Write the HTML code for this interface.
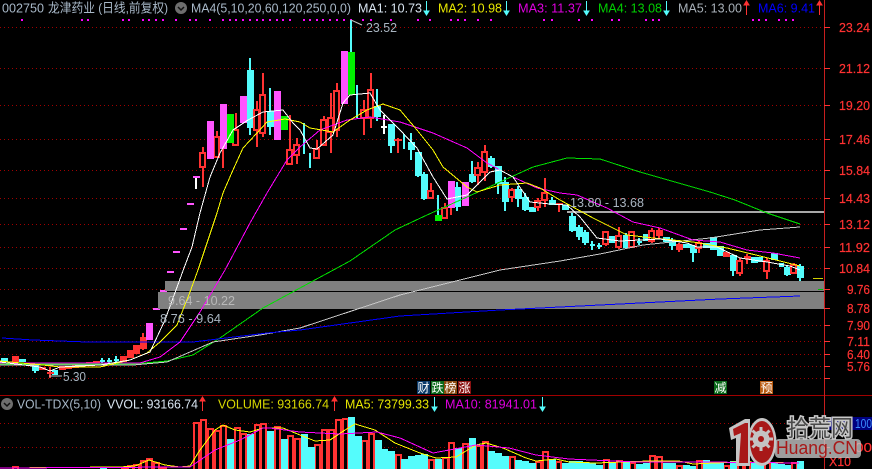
<!DOCTYPE html>
<html><head><meta charset="utf-8"><style>
html,body{margin:0;padding:0;background:#000;width:872px;height:469px;overflow:hidden}
svg{display:block;font-family:"Liberation Sans","Noto Sans CJK SC",sans-serif}
.g{stroke:#a00000;stroke-width:1;stroke-dasharray:1 3;fill:none}
.a{fill:#ff3232;font-size:13px;stroke:#ff3232;stroke-width:.2}
.h{font-size:13px}
.m{fill:none;stroke-width:1}
.lb{fill:#fff;font-size:12px}
</style></head><body>
<svg width="872" height="469" viewBox="0 0 872 469" xmlns="http://www.w3.org/2000/svg">
<rect width="872" height="469" fill="#000"/>
<path class="g" d="M0 27.5H824M0 68.5H824M0 105.5H824M0 139.5H824M0 170.5H824M0 198.5H824M0 224.5H824M0 247.5H824M0 268.5H824M0 289.5H824M0 308.5H824M0 325.5H824M0 341.5H824M0 354.5H824M0 366.5H824M0 378.5H824M0 423.5H824M0 447.5H824"/>
<path fill="#f0f" d="M21 19h2v2h-2zM81 19h2v2h-2zM87 19h2v2h-2zM122 19h2v2h-2zM128 19h2v2h-2zM142 19h2v2h-2zM148 19h2v2h-2zM155 19h2v2h-2zM162 19h2v2h-2zM175 19h2v2h-2zM189 19h2v2h-2zM195 19h2v2h-2zM209 19h2v2h-2zM222 19h2v2h-2zM229 19h2v2h-2zM235 19h2v2h-2zM242 19h2v2h-2zM249 19h2v2h-2zM256 19h2v2h-2zM262 19h2v2h-2zM269 19h2v2h-2zM276 19h2v2h-2zM282 19h2v2h-2zM289 19h2v2h-2zM303 19h2v2h-2zM309 19h2v2h-2zM316 19h2v2h-2zM322 19h2v2h-2zM329 19h2v2h-2zM336 19h2v2h-2zM343 19h2v2h-2zM350 19h2v2h-2zM362 19h2v2h-2zM370 19h2v2h-2zM390 19h2v2h-2zM417 19h2v2h-2zM429 19h2v2h-2zM450 19h2v2h-2zM457 19h2v2h-2zM464 19h2v2h-2zM477 19h2v2h-2zM490 19h2v2h-2zM543 19h2v2h-2zM551 19h2v2h-2zM578 19h2v2h-2zM591 19h2v2h-2zM611 19h2v2h-2zM618 19h2v2h-2zM645 19h2v2h-2zM652 19h2v2h-2zM658 19h2v2h-2zM752 19h2v2h-2zM758 19h2v2h-2zM765 19h2v2h-2zM778 19h2v2h-2zM785 19h2v2h-2zM792 19h2v2h-2z"/>

<!-- cyan wicks -->
<path stroke="#54fcfc" stroke-width="2" fill="none" shape-rendering="crispEdges" d="M351 20V52M250 58V135M270 88V135M304 123V154M310 153V168M357 85V118M377 89V121M391 124V153M404 134V149M411 133V160M418 152V177M424 172V200M438 195V216M457 182V211M472 161V183M491 156V168M498 166V194M505 177V211M518 186V207M525 193V211M552 197V205M572 213V232M579 225V240M585 230V245M592 241V250M599 243V249M626 233V248M639 238V245M672 238V250M693 245V262M733 255V276M787 265V276M800 264V281M102 358V364M109 358V364M116 356V364M35 365V373"/>
<!-- cyan bodies -->
<path fill="#54fcfc" shape-rendering="crispEdges" d="M247 70h7v58h-7zM267 111h7v16h-7zM374 106h7v11h-7zM388 124h7v22h-7zM408 142h7v8h-7zM415 152h7v24h-7zM421 174h7v25h-7zM454 187h7v20h-7zM469 174h7v8h-7zM488 158h7v9h-7zM495 166h7v18h-7zM502 182h7v20h-7zM515 189h7v10h-7zM522 197h7v13h-7zM529 207h7v5h-7zM549 200h7v5h-7zM562 205h7v5h-7zM569 216h7v15h-7zM576 227h7v10h-7zM582 232h7v11h-7zM590 244h5v2h-5zM597 245h5v2h-5zM609 236h7v7h-7zM623 235h7v13h-7zM637 241h5v2h-5zM643 234h7v7h-7zM663 237h7v5h-7zM669 240h7v6h-7zM683 244h7v4h-7zM690 245h7v8h-7zM703 243h7v5h-7zM710 237h7v13h-7zM717 246h7v10h-7zM730 255h7v16h-7zM751 257h7v6h-7zM758 257h5v5h-5zM771 253h7v7h-7zM779 263h5v4h-5zM784 267h7v8h-7zM797 266h7v12h-7zM1 358h7v4h-7zM19 359h7v3h-7zM32 365h7v6h-7zM52 370h6v5h-6zM100 360h5v2h-5zM107 360h5v2h-5zM114 359h5v2h-5z"/>
<!-- red wicks -->
<path stroke="#ff3232" stroke-width="2" fill="none" shape-rendering="crispEdges" d="M203 147V187M217 131V157M223 149V168M236 113V145M257 101V147M263 73V137M290 115V164M297 138V164M317 140V159M324 116V145M331 93V153M337 83V137M364 100V135M371 73V128M398 138V153M431 183V198M445 203V218M451 205V215M478 162V185M485 145V181M512 188V202M538 198V211M545 178V207M559 203V212M606 231V246M619 227V249M632 232V248M652 228V243M659 228V238M679 243V252M699 241V253M740 258V276M747 254V264M767 258V279M794 263V274M50 367V378M143 333V350"/>
<!-- red hollow bodies -->
<path stroke="#ff3232" stroke-width="2" fill="#000" shape-rendering="crispEdges" d="M200 153h5v14h-5zM214 137h5v20h-5zM233 130h5v15h-5zM254 110h5v20h-5zM260 95h5v38h-5zM287 150h5v14h-5zM294 145h5v10h-5zM314 149h5v9h-5zM321 120h5v25h-5zM328 118h5v14h-5zM334 91h5v39h-5zM361 110h5v8h-5zM368 90h5v28h-5zM428 191h5v7h-5zM442 208h5v10h-5zM475 168h5v7h-5zM482 152h5v20h-5zM509 190h5v7h-5zM535 201h5v6h-5zM542 193h5v7h-5zM603 232h5v12h-5zM616 236h5v11h-5zM629 232h5v15h-5zM649 231h5v10h-5zM696 243h5v5h-5zM737 261h5v12h-5zM764 261h5v10h-5zM791 265h5v8h-5z"/>
<path fill="#ff3232" shape-rendering="crispEdges" d="M394 139h8v2h-8zM556 203h7v2h-7zM656 230h7v6h-7zM676 244h7v6h-7zM723 252h7v5h-7zM744 256h7v3h-7zM12 356h7v6h-7zM39 367h7v3h-7zM47 372h7v2h-7zM59 366h7v4h-7zM65 367h7v2h-7zM72 365h7v3h-7zM79 365h7v2h-7zM86 362h7v3h-7zM93 361h7v3h-7zM120 356h7v6h-7zM127 350h7v8h-7zM133 345h7v9h-7zM140 337h7v12h-7z"/>
<!-- magenta & green bodies -->
<path fill="#ff54ff" shape-rendering="crispEdges" d="M207 121h7v38h-7zM220 104h7v45h-7zM240 96h7v27h-7zM274 91h7v49h-7zM341 51h7v53h-7zM448 181h7v27h-7zM462 182h7v24h-7zM146 323h7v17h-7z"/>
<path fill="#00f000" shape-rendering="crispEdges" d="M227 114h7v29h-7zM281 116h7v14h-7zM348 52h7v43h-7zM435 215h7v6h-7z"/>
<path fill="#ff54ff" shape-rendering="crispEdges" d="M193 176h7v2h-7zM187 203h7v2h-7zM180 228h7v2h-7zM173 251h7v2h-7zM167 271h7v2h-7zM160 290h7v2h-7zM153 308h7v2h-7z"/>
<rect x="195" y="178" width="2" height="11" fill="#fff"/>
<rect x="383" y="115" width="2" height="19" fill="#fff"/><rect x="381" y="126" width="6" height="2" fill="#fff"/>

<!-- zones -->
<rect x="165" y="281" width="659" height="10" fill="#808080"/>
<rect x="158" y="292" width="666" height="17" fill="#808080"/>
<rect x="567" y="211" width="257" height="2" fill="#a8a8a8"/>

<!-- MA lines -->
<g shape-rendering="crispEdges">
<polyline class="m" stroke="#00e000" points="0,364 133,364 167,361 193,355 220,338 263,308 300,288 350,261 395,230 427,215 467,197 500,182 533,167 567,158 600,159 640,172 668,180 710,192 735,200 767,213 800,224"/>
<polyline class="m" stroke="#c8c8c8" points="0,365 133,365 167,362 213,342 260,335 300,328 400,295 500,270 560,261 600,254 643,245 710,238 760,230 800,227"/>
<polyline class="m" stroke="#0000ff" points="2,338 33,340 60,341 87,342 193,342 267,333 300,330 400,316 500,310 560,307 640,303 720,299 800,296"/>
<polyline class="m" stroke="#ff00ff" points="0,363 140,363 160,357 180,342 200,312 225,270 250,223 267,193 287,160 300,147 320,130 347,120 370,117 400,122 433,133 467,148 487,163 513,177 537,188 560,193 577,195 607,208 633,222 660,228 693,240 720,242 747,250 773,253 800,258"/>
<polyline class="m" stroke="#ffff00" points="0,361 10,362 43,365 60,367 100,367 130,360 147,353 160,342 177,325 190,292 198,270 207,243 217,213 223,193 233,170 243,148 257,133 267,122 285,119 300,122 310,128 333,132 350,120 367,110 383,104 400,110 417,130 433,150 443,167 467,187 477,192 500,185 527,183 540,188 560,200 593,218 627,235 653,238 693,242 727,248 760,256 800,266"/>
<polyline class="m" stroke="#ffffff" points="0,362 40,367 50,371 60,367 100,365 130,360 150,352 165,320 184,268 192,247 200,213 210,177 220,153 233,130 248,120 263,112 283,110 293,123 300,130 310,148 317,149 333,135 343,103 350,95 370,93 380,110 400,130 417,148 433,177 447,199 467,195 490,172 500,170 513,177 530,202 550,204 567,205 580,217 597,238 620,241 660,239 687,243 697,247 717,247 740,258 767,262 790,266 800,270"/>
</g>
<rect x="813" y="278" width="10" height="1" fill="#d0d000"/>
<rect x="818" y="289" width="5" height="1" fill="#00c000"/>

<!-- annotations -->
<g class="h" fill="#a8b4c0">
<path d="M351 20l11 5" stroke="#c0c0c0" fill="none"/>
<text x="366" y="32" textLength="31" lengthAdjust="spacingAndGlyphs">23.52</text>
<path d="M49 376H62" stroke="#c0c0c0" fill="none"/>
<text x="63" y="381" textLength="23" lengthAdjust="spacingAndGlyphs">5.30</text>
<text x="570" y="207" textLength="74" lengthAdjust="spacingAndGlyphs">13.80 - 13.68</text>
<text x="168" y="305" textLength="67" lengthAdjust="spacingAndGlyphs" fill="#b8b8b8">9.64 - 10.22</text>
<text x="160" y="323" textLength="61" lengthAdjust="spacingAndGlyphs">8.76 - 9.64</text>
</g>

<!-- labels -->
<g shape-rendering="crispEdges">
<rect x="417" y="381" width="13" height="13" fill="#0a3a6a"/><rect x="431" y="381" width="13" height="13" fill="#0a6a1a"/><rect x="444" y="381" width="13" height="13" fill="#8a4a10"/><rect x="458" y="381" width="13" height="13" fill="#8a1010"/><rect x="714" y="381" width="13" height="13" fill="#0a6a1a"/><rect x="760" y="381" width="13" height="13" fill="#b85a10"/>
</g>
<g class="lb"><text x="417.500" y="392">财</text><text x="431.500" y="392">跌</text><text x="444.500" y="392">榜</text><text x="458.500" y="392">涨</text><text x="714.500" y="392">减</text><text x="760.500" y="392">预</text></g>

<!-- volume bars -->
<path stroke="#ff3232" stroke-width="2" fill="#000" shape-rendering="crispEdges" d="M194 423h5v47h-5zM201 420h5v50h-5zM208 429h5v41h-5zM215 431h5v39h-5zM221 426h5v44h-5zM235 428h5v42h-5zM241 434h5v36h-5zM255 425h5v45h-5zM261 424h5v46h-5zM275 427h5v43h-5zM288 436h5v34h-5zM295 439h5v31h-5zM315 445h5v25h-5zM322 430h5v40h-5zM329 430h5v40h-5zM336 420h5v50h-5zM343 419h5v51h-5zM362 441h5v29h-5zM369 434h5v36h-5zM396 455h5v15h-5zM429 460h5v10h-5zM443 458h5v12h-5zM449 443h5v27h-5zM463 444h5v26h-5zM476 446h5v24h-5zM483 442h5v28h-5zM510 457h5v13h-5zM536 462h5v8h-5zM543 452h5v18h-5zM556 462h5v8h-5zM604 460h5v10h-5zM617 461h5v9h-5zM630 463h5v7h-5zM650 456h5v14h-5zM657 457h5v13h-5zM677 466h5v4h-5zM697 461h5v9h-5zM724 466h5v4h-5zM738 463h5v7h-5zM745 462h5v8h-5zM765 463h5v7h-5zM792 463h5v7h-5zM13 467h5v3h-5zM122 468h5v2h-5zM128 466h5v4h-5zM134 465h5v5h-5zM141 461h5v9h-5zM147 459h5v11h-5zM154 463h5v7h-5zM161 468h5v2h-5z"/>
<path fill="#54fcfc" shape-rendering="crispEdges" d="M227 439h7v30h-7zM247 434h7v35h-7zM267 431h7v38h-7zM281 439h7v30h-7zM301 434h7v35h-7zM308 447h7v22h-7zM348 417h7v52h-7zM355 436h7v33h-7zM375 440h7v29h-7zM381 449h7v20h-7zM388 451h7v18h-7zM401 459h7v10h-7zM408 456h7v13h-7zM415 455h7v14h-7zM421 454h7v15h-7zM435 459h7v10h-7zM455 448h7v21h-7zM469 438h7v31h-7zM488 451h7v18h-7zM495 453h7v16h-7zM502 456h7v13h-7zM515 460h7v9h-7zM522 461h7v8h-7zM529 463h7v6h-7zM549 459h7v10h-7zM562 463h7v6h-7zM569 461h7v8h-7zM576 461h7v8h-7zM582 463h7v6h-7zM589 463h7v6h-7zM596 465h7v4h-7zM609 463h7v6h-7zM623 462h7v7h-7zM636 464h7v5h-7zM643 463h7v6h-7zM663 463h7v6h-7zM669 463h7v6h-7zM683 465h7v4h-7zM689 466h7v3h-7zM703 460h7v9h-7zM710 462h7v7h-7zM717 463h7v6h-7zM730 461h7v8h-7zM751 463h7v6h-7zM757 463h7v6h-7zM771 463h7v6h-7zM778 464h7v5h-7zM784 465h7v4h-7zM797 461h7v8h-7zM100 468h7v1h-7z"/>
<g shape-rendering="crispEdges">
<polyline class="m" stroke="#ffff00" points="0,468 120,467 135,466 149,460 165,465 180,467 190,466 200,450 215,430 223,425 235,430 250,432 263,428 283,428 300,435 315,441 330,440 345,430 355,424 375,430 395,443 420,453 436,458 456,457 476,445 486,443 503,448 526,458 536,461 556,459 569,462 596,463 649,461 679,461 693,464 736,462 799,463"/>
<polyline class="m" stroke="#ff00ff" points="0,468 190,467 215,450 240,440 263,428 270,428 300,432 340,434 377,432 400,438 433,453 476,445 509,448 536,455 569,459 636,462 703,462 799,463"/>
</g>

<!-- frames -->
<rect x="0" y="395" width="872" height="1" fill="#a00000"/>
<rect x="824" y="0" width="1" height="469" fill="#c81e1e"/>
<path stroke="#ff3232" fill="none" d="M824 27.500h6M824 68.500h6M824 105.500h6M824 139.500h6M824 170.500h6M824 198.500h6M824 224.500h6M824 247.500h6M824 268.500h6M824 289.500h6M824 308.500h6M824 325.500h6M824 341.500h6M824 354.500h6M824 366.500h6M824 378.500h6M824 447.500h6"/>
<g class="a">
<text x="839" y="32" textLength="31" lengthAdjust="spacingAndGlyphs">23.24</text>
<text x="839" y="73" textLength="31" lengthAdjust="spacingAndGlyphs">21.12</text>
<text x="839" y="110" textLength="31" lengthAdjust="spacingAndGlyphs">19.20</text>
<text x="839" y="144" textLength="31" lengthAdjust="spacingAndGlyphs">17.46</text>
<text x="839" y="175" textLength="31" lengthAdjust="spacingAndGlyphs">15.84</text>
<text x="839" y="203" textLength="31" lengthAdjust="spacingAndGlyphs">14.43</text>
<text x="839" y="229" textLength="31" lengthAdjust="spacingAndGlyphs">13.12</text>
<text x="839" y="252" textLength="31" lengthAdjust="spacingAndGlyphs">11.92</text>
<text x="839" y="273" textLength="31" lengthAdjust="spacingAndGlyphs">10.84</text>
<text x="847" y="294" textLength="23" lengthAdjust="spacingAndGlyphs">9.76</text>
<text x="847" y="313" textLength="23" lengthAdjust="spacingAndGlyphs">8.78</text>
<text x="847" y="330" textLength="23" lengthAdjust="spacingAndGlyphs">7.90</text>
<text x="847" y="346" textLength="23" lengthAdjust="spacingAndGlyphs">7.11</text>
<text x="847" y="359" textLength="23" lengthAdjust="spacingAndGlyphs">6.40</text>
<text x="847" y="371" textLength="23" lengthAdjust="spacingAndGlyphs">5.76</text>
</g>
<rect x="828" y="417" width="44" height="13" fill="#000080"/>
<text x="855" y="428" font-size="13" fill="#3a8cff" textLength="17" lengthAdjust="spacingAndGlyphs">100</text>
<text x="855" y="452" class="a" textLength="17" lengthAdjust="spacingAndGlyphs">00</text>
<text x="829" y="466" class="a" textLength="22" lengthAdjust="spacingAndGlyphs">X10</text>

<!-- header -->
<g class="h">
<text x="2" y="12.500" fill="#a8b8c8" textLength="42" lengthAdjust="spacingAndGlyphs">002750</text>
<text x="48" y="12.500" fill="#a8b8c8" textLength="120" lengthAdjust="spacingAndGlyphs">龙津药业 (日线,前复权)</text>
<circle cx="181" cy="8" r="6" fill="#6e6e6e"/><path d="M178 7l3 3 3-3" stroke="#111" stroke-width="1.500" fill="none"/>
<text x="191" y="12.500" fill="#a8b8c8" textLength="160" lengthAdjust="spacingAndGlyphs">MA4(5,10,20,60,120,250,0,0)</text>
<text x="358" y="12.500" fill="#d8e4f0" textLength="64" lengthAdjust="spacingAndGlyphs">MA1: 10.73</text>
<text x="438" y="12.500" fill="#e8e800" textLength="64" lengthAdjust="spacingAndGlyphs">MA2: 10.98</text>
<text x="518" y="12.500" fill="#e000e0" textLength="64" lengthAdjust="spacingAndGlyphs">MA3: 11.37</text>
<text x="598" y="12.500" fill="#00d000" textLength="64" lengthAdjust="spacingAndGlyphs">MA4: 13.08</text>
<text x="678" y="12.500" fill="#a8b0b8" textLength="64" lengthAdjust="spacingAndGlyphs">MA5: 13.00</text>
<text x="758" y="12.500" fill="#0000ff" textLength="57" lengthAdjust="spacingAndGlyphs">MA6: 9.41</text>
</g>
<path stroke="#54fcfc" fill="#54fcfc" d="M426.500 1V11M506.500 1V11M586.500 1V11M666.500 1V11M424 11h5l-2.500 4zM504 11h5l-2.500 4zM584 11h5l-2.500 4zM664 11h5l-2.500 4z"/>
<path stroke="#ff3232" fill="#ff3232" d="M746.500 4V15M819.500 4V15M744 5h5l-2.500-4zM817 5h5l-2.500-4z"/>

<!-- volume header -->
<g class="h">
<circle cx="7" cy="404" r="6" fill="#6e6e6e"/><path d="M4 403l3 3 3-3" stroke="#111" stroke-width="1.500" fill="none"/>
<text x="17" y="408.500" fill="#a8b8c8" textLength="84" lengthAdjust="spacingAndGlyphs">VOL-TDX(5,10)</text>
<text x="107" y="408.500" fill="#d8e4f0" textLength="91" lengthAdjust="spacingAndGlyphs">VVOL: 93166.74</text>
<text x="218" y="408.500" fill="#d8d800" textLength="111" lengthAdjust="spacingAndGlyphs">VOLUME: 93166.74</text>
<text x="345" y="408.500" fill="#e8e800" textLength="84" lengthAdjust="spacingAndGlyphs">MA5: 73799.33</text>
<text x="445" y="408.500" fill="#e000e0" textLength="92" lengthAdjust="spacingAndGlyphs">MA10: 81941.01</text>
</g>
<path stroke="#ff3232" fill="#ff3232" d="M202.500 400V411M334.500 400V411M200 401h5l-2.500-4zM332 401h5l-2.500-4z"/>
<path stroke="#54fcfc" fill="#54fcfc" d="M434.500 397V407M542.500 397V407M432 407h5l-2.500 4zM540 407h5l-2.500 4z"/>

<!-- watermark -->
<g>
<rect x="775" y="439" width="86" height="19" rx="4" fill="#c4c4c4" fill-opacity=".8"/>
<path d="M729 428L745 419H750V466H736V438L731 440Z" fill="#c4c4c4"/>
<ellipse cx="762" cy="442" rx="14.500" ry="24" fill="#c4c4c4"/>
<path d="M733 429L745 423H748V463H739L741 433L734 436Z" fill="#a81818"/>
<ellipse cx="762" cy="442" rx="12" ry="21" fill="#a81818"/>
<circle cx="761" cy="439" r="8.500" fill="#c4c4c4"/>
<path d="M761 427V451M749 439H773M752.500 430.500L769.500 447.500M752.500 447.500L769.500 430.500" stroke="#c4c4c4" stroke-width="3" fill="none"/>
<circle cx="761" cy="439" r="3" fill="#a81818"/>
<text x="787" y="436" font-size="23" fill="#4a4a4a" stroke="#c8c8c8" stroke-width="3" paint-order="stroke" textLength="66" lengthAdjust="spacingAndGlyphs">拾荒网</text>
<text x="776" y="454" font-size="18" fill="#a81818" textLength="82" lengthAdjust="spacingAndGlyphs">Huang.CN</text>
</g>
</svg>
</body></html>
